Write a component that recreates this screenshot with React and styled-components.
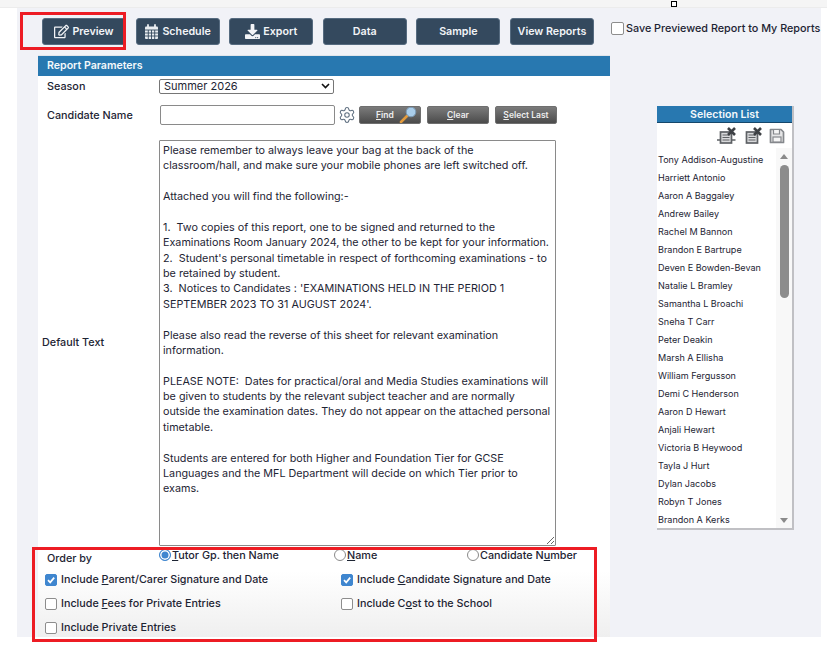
import React from 'react';
import styled, { createGlobalStyle } from 'styled-components';
import { FaRegEdit, FaDownload } from 'react-icons/fa';
import { Settings } from 'lucide-react';

const Global = createGlobalStyle`
  html, body { margin: 0; padding: 0; background: #fff; }
  body { font-family: Inter, "Liberation Sans", sans-serif; color: #1d2433; }
`;

const Page = styled.div`
  position: relative;
  width: 827px;
  height: 661px;
  overflow: hidden;
  background: #fff;
`;
const TopStrip = styled.div`
  height: 7px;
  background: #f5f5f5;
  border-bottom: 1px solid #ececec;
`;
const Handle = styled.div`
  position: absolute;
  left: 671px;
  top: 1px;
  width: 4px;
  height: 4px;
  border: 1.5px solid #000;
  background: #fff;
`;
const Main = styled.main`
  margin-left: 17px;
  width: 804px;
  height: 629px;
  background: #f1f2f7;
  display: flex;
  flex-direction: column;
  box-sizing: border-box;
  padding: 10px 0 0 21px;
`;
const Toolbar = styled.div`
  display: flex;
  align-items: flex-start;
  height: 37px;
  gap: 9.6px;
  padding-left: 4px;
`;
const ToolButton = styled.button`
  flex: none;
  width: 84px;
  height: 27px;
  border: 1px solid #566b80;
  border-radius: 3px;
  background: #34495e;
  color: #f2f4f7;
  font: 600 10.7px Inter, sans-serif;
  display: flex;
  align-items: center;
  justify-content: center;
  gap: 3px;
  padding: 0;
  svg { font-size: 15px; flex: none; }
`;
const SaveLabel = styled.label`
  display: flex;
  align-items: center;
  gap: 2.4px;
  margin: 4px 0 0 7px;
  font-size: 10.8px;
  font-weight: 500;
  white-space: nowrap;
`;
const Box = styled.span`
  width: ${p => p.$size || 10}px;
  height: ${p => p.$size || 10}px;
  flex: none;
  border-radius: 2px;
  border: 1px solid #8d8d8d;
  background: #fff;
  display: inline-flex;
  align-items: center;
  justify-content: center;
  ${p => p.$checked && 'background:#3f86cf;border-color:#3f86cf;'}
`;
const Content = styled.div`
  display: flex;
  flex: 1;
  min-height: 0;
`;
const Panel = styled.section`
  width: 572px;
  flex: none;
  background: linear-gradient(#fff 0, #fff 515px, #efefef 100%);
  border-top: 1px solid #e1e5ea;
  box-sizing: border-box;
  display: flex;
  flex-direction: column;
`;
const PanelHeader = styled.div`
  height: 20px;
  line-height: 20px;
  background: #2878b0;
  color: #f4f8fb;
  font-size: 10.6px;
  font-weight: 600;
  padding-left: 9px;
`;
const FieldRow = styled.div`
  display: grid;
  grid-template-columns: 112px 1fr;
  align-items: center;
  padding-left: 9px;
  height: ${p => p.$h}px;
  font-size: 10.8px;
  font-weight: 500;
`;
const SelectBox = styled.div`
  width: 175px;
  height: 15px;
  border: 1px solid #767676;
  border-radius: 2px;
  background: #fff;
  box-sizing: border-box;
  display: flex;
  align-items: center;
  justify-content: space-between;
  padding: 0 3px 0 4px;
  font-size: 11px;
  font-weight: 400;
`;
const NameRow = styled.div`
  display: flex;
  align-items: center;
`;
const NameInput = styled.div`
  width: 175px;
  height: 20px;
  margin-left: 1px;
  border: 1px solid #8a8a8a;
  border-radius: 2px;
  background: #fff;
  box-sizing: border-box;
`;
const Gear = styled(Settings)`
  width: 18px;
  height: 18px;
  margin: 0 3px;
  color: #5f6f80;
  stroke-width: 1.4;
`;
const GreyButton = styled.button`
  width: 62px;
  height: 18px;
  margin-right: 6px;
  padding: 0;
  border: 1px solid #6f6f6f;
  border-radius: 2px;
  background: linear-gradient(#7b7b7b, #4b4b4b);
  color: #eee;
  font: 600 8.5px Inter, sans-serif;
  display: flex;
  align-items: center;
  justify-content: center;
  gap: 5px;
  u { text-underline-offset: 1px; }
`;
const FindButton = styled(GreyButton)`
  padding-left: 16px;
  box-sizing: border-box;
  justify-content: flex-start;
  overflow: hidden;
`;
const TextRow = styled.div`
  display: grid;
  grid-template-columns: 118px 397px;
  align-items: center;
  padding-left: 4px;
  margin-top: 6px;
  font-size: 10.8px;
  font-weight: 500;
`;
const DefaultLabel = styled.span`
  padding-bottom: 2px;
`;
const Letter = styled.textarea`
  width: 397px;
  height: 406px;
  box-sizing: border-box;
  margin: 0 0 0 -1px;
  padding: 2px 3px;
  border: 1px solid #8a8a8a;
  border-radius: 1px;
  background: #fff;
  color: #1d2433;
  font: 400 10.78px/15.38px Inter, sans-serif;
  overflow: hidden;
  outline: none;
  display: block;
`;
const OrderRow = styled.div`
  display: grid;
  grid-template-columns: 112px 175px 133px 1fr;
  padding-left: 9px;
  height: 26px;
  margin-top: 1px;
  font-size: 10.8px;
  font-weight: 500;
`;
const OrderLabel = styled.span`
  padding-top: 5px;
`;
const RadioLabel = styled.label`
  display: flex;
  align-items: flex-start;
  line-height: 14px;
  margin-top: 2px;
`;
const Radio = styled.span`
  width: 12px;
  height: 12px;
  margin-right: 1px;
  flex: none;
  border-radius: 50%;
  box-sizing: border-box;
  border: 1px solid #8a8a8a;
  background: #fff;
  ${p => p.$on && 'border: 1.5px solid #3f86cf; box-shadow: inset 0 0 0 1.5px #fff; background:#3f86cf;'}
`;
const CheckRow = styled.div`
  display: grid;
  grid-template-columns: 296px 1fr;
  padding-left: 7px;
  height: ${p => p.$h || 24}px;
  align-items: flex-start;
`;
const CheckLabel = styled.label`
  display: flex;
  align-items: center;
  gap: 4px;
  font-size: 10.75px;
  font-weight: 500;
  line-height: 14px;
  white-space: nowrap;
  u { text-underline-offset: 1px; }
`;
const Side = styled.aside`
  margin: 51px 0 0 47px;
  width: 137px;
  height: 424px;
  flex: none;
  background: #fff;
  box-sizing: border-box;
  border-right: 2px solid #c0c0c4;
  border-bottom: 2px solid #c0c0c4;
  display: flex;
  flex-direction: column;
`;
const SideHeader = styled.div`
  height: 16px;
  line-height: 17px;
  background: #2878b0;
  border-bottom: 1px solid #15476b;
  color: #f4f8fb;
  text-align: center;
  font-size: 10.6px;
  font-weight: 600;
`;
const SideTools = styled.div`
  height: 25px;
  display: flex;
  align-items: center;
  justify-content: flex-end;
  gap: 6px;
  padding-right: 7px;
  svg { display: block; }
`;
const SideBody = styled.div`
  flex: 1;
  display: flex;
  min-height: 0;
`;
const Names = styled.ul`
  list-style: none;
  margin: 0;
  padding: 3px 0 0;
  flex: 1;
  font-size: 9.05px;
  font-weight: 400;
  line-height: 18px;
  white-space: nowrap;
  overflow: hidden;
  li { height: 18px; padding-left: 1px; }
`;
const Scroll = styled.div`
  width: 16px;
  display: flex;
  flex-direction: column;
  align-items: center;
  background: #f8f8f8;
  padding: 6px 0 5px;
  box-sizing: border-box;
`;
const Arrow = styled.div`
  width: 0;
  height: 0;
  border-left: 4px solid transparent;
  border-right: 4px solid transparent;
  ${p => p.$down ? 'border-top: 5px solid #8a8a8a; margin-top:auto;' : 'border-bottom: 5px solid #8a8a8a;'}
`;
const Thumb = styled.div`
  width: 9px;
  height: 133px;
  margin-top: 6px;
  border-radius: 4.5px;
  background: #8c8c8c;
`;
const RedFrame = styled.div`
  position: absolute;
  box-sizing: border-box;
  border: 3px solid #ed1c24;
  left: ${p => p.$x}px;
  top: ${p => p.$y}px;
  width: ${p => p.$w}px;
  height: ${p => p.$h}px;
  pointer-events: none;
`;

const letter = `Please remember to always leave your bag at the back of the
classroom/hall, and make sure your mobile phones are left switched off.

Attached you will find the following:-

1.  Two copies of this report, one to be signed and returned to the
Examinations Room January 2024, the other to be kept for your information.
2.  Student's personal timetable in respect of forthcoming examinations - to
be retained by student.
3.  Notices to Candidates : 'EXAMINATIONS HELD IN THE PERIOD 1
SEPTEMBER 2023 TO 31 AUGUST 2024'.

Please also read the reverse of this sheet for relevant examination
information.

PLEASE NOTE:  Dates for practical/oral and Media Studies examinations will
be given to students by the relevant subject teacher and are normally
outside the examination dates. They do not appear on the attached personal
timetable.

Students are entered for both Higher and Foundation Tier for GCSE
Languages and the MFL Department will decide on which Tier prior to
exams.`;

const names = ['Tony Addison-Augustine','Harriett Antonio','Aaron A Baggaley','Andrew Bailey','Rachel M Bannon','Brandon E Bartrupe','Deven E Bowden-Bevan','Natalie L Bramley','Samantha L Broachi','Sneha T Carr','Peter Deakin','Marsh A Ellisha','William Fergusson','Demi C Henderson','Aaron D Hewart','Anjali Hewart','Victoria B Heywood','Tayla J Hurt','Dylan Jacobs','Robyn T Jones','Brandon A Kerks'];

const Tick = () => (
  <svg width="10" height="10" viewBox="0 0 10 10"><path d="M2 5.2 4.2 7.4 8.2 2.6" fill="none" stroke="#fff" strokeWidth="1.7" /></svg>
);
const Calendar = () => (
  <svg width="15" height="16" viewBox="0 0 15 16">
    <rect x="1" y="2.5" width="13" height="12.5" rx="1" fill="#e9edf1" />
    <path d="M1 6h13M1 9h13M1 12h13M4.3 6v9M7.5 6v9M10.7 6v9" stroke="#34495e" strokeWidth="0.9" />
    <path d="M4 1v3M11 1v3" stroke="#e9edf1" strokeWidth="1.8" strokeLinecap="round" />
  </svg>
);
const Magnifier = () => (
  <svg width="18" height="16" viewBox="0 0 18 16">
    <path d="M2 15 8 9" stroke="#e29a3c" strokeWidth="2.6" strokeLinecap="round" />
    <circle cx="12" cy="5" r="4.8" fill="#a9cdea" stroke="#7b99b3" />
  </svg>
);
const DocCross = ({ lines }) => (
  <svg width="20" height="17" viewBox="0 0 20 17">
    <rect x="3.5" y="5" width="11" height="11" fill="#d8d9db" stroke="#5e6165" strokeWidth="1.7" />
    <path d="M5.5 8h7M5.5 10.5h7M5.5 13h7" stroke="#5e6165" strokeWidth="1.2" />
    {lines && <path d="M0 13h3.5M14.5 13h4" stroke="#5e6165" strokeWidth="1.3" />}
    <path d="M11 1l7 7M18 1l-7 7" stroke="#3e4145" strokeWidth="2.6" />
  </svg>
);
const SaveDisk = () => (
  <svg width="16" height="16" viewBox="0 0 16 16">
    <path d="M1.5 1.5h10.5l2.5 2.5v10.5h-13z" fill="#e6e6e7" stroke="#85888c" strokeWidth="1.7" strokeLinejoin="round" />
    <path d="M4.5 2v4h6V2" fill="#f5f5f5" stroke="#85888c" strokeWidth="1.2" />
    <rect x="4" y="9" width="8" height="5" fill="#f5f5f5" stroke="#85888c" strokeWidth="1.2" />
  </svg>
);

export default function App() {
  return (
    <Page>
      <Global />
      <TopStrip />
      <Handle />
      <Main>
        <Toolbar>
          <ToolButton><FaRegEdit />Preview</ToolButton>
          <ToolButton><Calendar />Schedule</ToolButton>
          <ToolButton><FaDownload />Export</ToolButton>
          <ToolButton>Data</ToolButton>
          <ToolButton>Sample</ToolButton>
          <ToolButton>View Reports</ToolButton>
          <SaveLabel><Box $size={11} />Save Previewed Report to My Reports</SaveLabel>
        </Toolbar>
        <Content>
          <Panel>
            <PanelHeader>Report Parameters</PanelHeader>
            <FieldRow $h={20}>
              <span>Season</span>
              <SelectBox>Summer 2026
                <svg width="9" height="6" viewBox="0 0 9 6"><path d="M1 1l3.5 3.5L8 1" fill="none" stroke="#111" strokeWidth="1.6" /></svg>
              </SelectBox>
            </FieldRow>
            <FieldRow $h={38}>
              <span>Candidate Name</span>
              <NameRow>
                <NameInput />
                <Gear />
                <FindButton><span><u>F</u>ind</span><Magnifier /></FindButton>
                <GreyButton><span><u>C</u>lear</span></GreyButton>
                <GreyButton><span><u>S</u>elect Last</span></GreyButton>
              </NameRow>
            </FieldRow>
            <TextRow>
              <DefaultLabel>Default Text</DefaultLabel>
              <Letter defaultValue={letter} spellCheck={false} wrap="off" />
            </TextRow>
            <OrderRow>
              <OrderLabel>Order by</OrderLabel>
              <RadioLabel><Radio $on /><span><u>T</u>utor Gp. then Name</span></RadioLabel>
              <RadioLabel><Radio /><span><u>N</u>ame</span></RadioLabel>
              <RadioLabel><Radio /><span>Candidate N<u>u</u>mber</span></RadioLabel>
            </OrderRow>
            <CheckRow>
              <CheckLabel><Box $checked><Tick /></Box><span>Include <u>P</u>arent/Carer Signature and Date</span></CheckLabel>
              <CheckLabel><Box $checked><Tick /></Box><span>Include <u>C</u>andidate Signature and Date</span></CheckLabel>
            </CheckRow>
            <CheckRow>
              <CheckLabel><Box /><span>Include <u>F</u>ees for Private Entries</span></CheckLabel>
              <CheckLabel><Box /><span>Include C<u>o</u>st to the School</span></CheckLabel>
            </CheckRow>
            <CheckRow $h={14}>
              <CheckLabel><Box /><span>Include Private Entries</span></CheckLabel>
            </CheckRow>
          </Panel>
          <Side>
            <SideHeader>Selection List</SideHeader>
            <SideTools>
              <DocCross lines />
              <DocCross />
              <SaveDisk />
            </SideTools>
            <SideBody>
              <Names>{names.map(n => <li key={n}>{n}</li>)}</Names>
              <Scroll><Arrow /><Thumb /><Arrow $down /></Scroll>
            </SideBody>
          </Side>
        </Content>
      </Main>
      <RedFrame $x={20} $y={12} $w={106} $h={38} />
      <RedFrame $x={32} $y={547} $w={565} $h={95} />
    </Page>
  );
}
